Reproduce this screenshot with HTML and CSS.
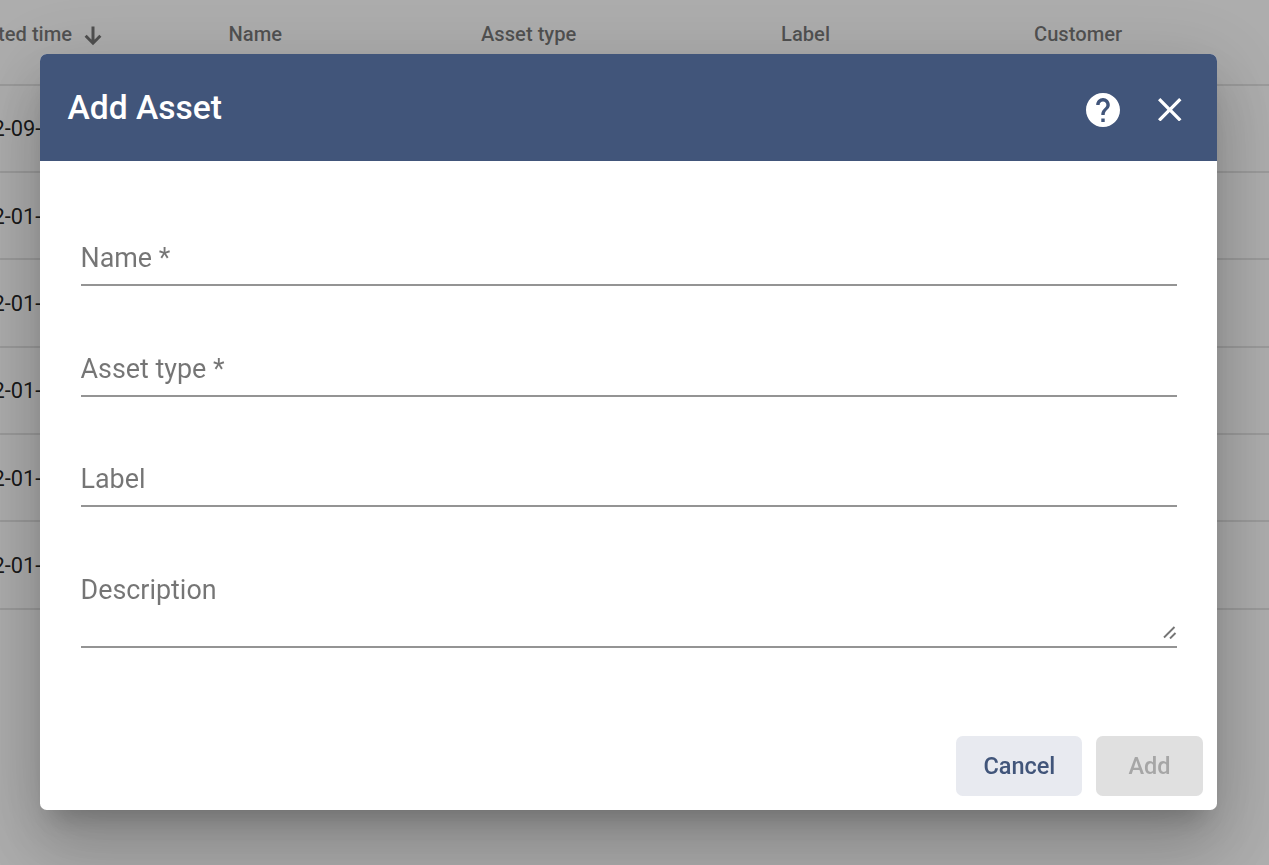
FILE: index.html
```html
<!DOCTYPE html>
<html lang="en">
<head>
<meta charset="utf-8">
<title>Add Asset</title>
<link rel="stylesheet" href="styles.css">
</head>
<body>
<main class="table">
  <div class="row head">
    <span class="sorted">ted time
      <svg class="arrow" viewBox="0 0 18 20"><path d="M9 0.500v16.500M1.600 9.800L9 17.200 16.400 9.800" fill="none" stroke="currentColor" stroke-width="3"/></svg>
    </span>
    <span>Name</span><span>Asset type</span><span>Label</span><span>Customer</span>
  </div>
  <div class="row"><span class="date">2-09-</span></div>
  <div class="row"><span class="date">2-01-</span></div>
  <div class="row"><span class="date">2-01-</span></div>
  <div class="row"><span class="date">2-01-</span></div>
  <div class="row"><span class="date">2-01-</span></div>
  <div class="row"><span class="date">2-01-</span></div>
</main>
<div class="backdrop">
  <section class="dialog" role="dialog">
    <header class="toolbar">
      <h2>Add Asset</h2>
      <svg class="help" viewBox="2 2 20 20"><path fill="currentColor" d="M12 2C6.48 2 2 6.48 2 12s4.480 10 10 10 10-4.480 10-10S17.520 2 12 2zm1 17h-2v-2h2v2zm2.070-7.750l-.9.920C13.450 12.900 13 13.500 13 15h-2v-.5c0-1.100.450-2.100 1.170-2.830l1.240-1.260c.370-.360.590-.860.590-1.410 0-1.100-.9-2-2-2s-2 .9-2 2H8c0-2.210 1.790-4 4-4s4 1.790 4 4c0 .880-.360 1.680-.930 2.250z"/></svg>
      <svg class="close" viewBox="5 5 14 14"><path fill="currentColor" d="M19 6.410L17.590 5 12 10.590 6.410 5 5 6.410 10.590 12 5 17.590 6.410 19 12 13.410 17.590 19 19 17.590 13.410 12z"/></svg>
    </header>
    <form class="content">
      <div class="field"><label>Name *</label></div>
      <div class="field"><label>Asset type *</label></div>
      <div class="field"><label>Label</label></div>
      <div class="field area"><label>Description</label>
        <svg class="grip" viewBox="0 0 14 14"><path d="M1 12.500L11.500 2M7 13.500L12.500 8" fill="none" stroke="currentColor" stroke-width="1.900"/></svg>
      </div>
    </form>
    <footer class="actions">
      <button class="cancel" type="button">Cancel</button>
      <button class="add" type="button" disabled>Add</button>
    </footer>
  </section>
</div>
</body>
</html>
```
FILE: styles.css
```css
* { box-sizing: border-box; }
body {
  margin: 0;
  height: 865px;
  overflow: hidden;
  background: #fff;
  font-family: Roboto, "Liberation Sans", sans-serif;
}
.table { display: flex; flex-direction: column; }
.row {
  display: flex;
  align-items: center;
  height: 87.36px;
  padding-bottom: 1px;
  background: linear-gradient(#e4e4e4, #e4e4e4) left bottom / 100% 2px no-repeat;
  font-size: 21.84px;
  color: rgba(0, 0, 0, .87);
}
.head {
  display: grid;
  grid-template-columns: 228.5px 252.5px 300px 253px 1fr;
  height: 85.5px;
  padding-bottom: 17px;
  font-size: 20.16px;
  font-weight: 500;
  color: rgba(0, 0, 0, .54);
}
.sorted { display: flex; align-items: center; margin-left: -2px; }
.arrow { width: 18px; height: 20px; margin: 3px 0 0 11.5px; }
.date { margin-left: -7.500px; }
.backdrop {
  position: fixed;
  inset: 0;
  padding: 54px 52px 0 40px;
  background: rgba(0, 0, 0, .32);
}
.dialog {
  display: flex;
  flex-direction: column;
  height: 755.5px;
  border-radius: 6.72px;
  background: #fff;
  overflow: hidden;
  box-shadow: 0 18.5px 25.2px -11.8px rgba(0, 0, 0, .2),
    0 40.3px 63.8px 5px rgba(0, 0, 0, .14),
    0 15.1px 77.3px 13.4px rgba(0, 0, 0, .12);
}
.toolbar {
  display: flex;
  align-items: center;
  height: 107.300px;
  flex: none;
  padding: 4px 35.500px 0 27.500px;
  background: #41557a;
  color: #fff;
}
h2 { flex: 1; margin: -4px 0 0; font-size: 33.6px; font-weight: 500; }
.help { width: 34px; height: 34px; }
.close { width: 23.500px; height: 23.500px; margin-left: 38.500px; }
.content { flex: 1; padding: 26.800px 40.5px 0; }
.field {
  display: flex;
  height: 110.600px;
  padding-top: 53px;
  background: linear-gradient(#949494, #949494) 0 96px / 100% 2px no-repeat;
  color: rgba(0, 0, 0, .54);
  font-size: 26.880px;
  line-height: 34px;
}
.field label { flex: 1; }
.area { background-position: 0 126px; height: 140px; }
.grip { width: 14px; height: 14px; margin-top: 52px; }
.actions { display: flex; justify-content: flex-end; gap: 13.440px; padding: 0 13.700px 13.440px; }
button {
  height: 60.500px;
  padding: 0;
  border: 0;
  border-radius: 6.720px;
  font: 500 23.520px Roboto, "Liberation Sans", sans-serif;
}
.cancel { width: 126px; background: #e8eaf0; color: #41557a; }
.add { width: 107.500px; background: #e0e0e0; color: #a6a6a6; }
```
